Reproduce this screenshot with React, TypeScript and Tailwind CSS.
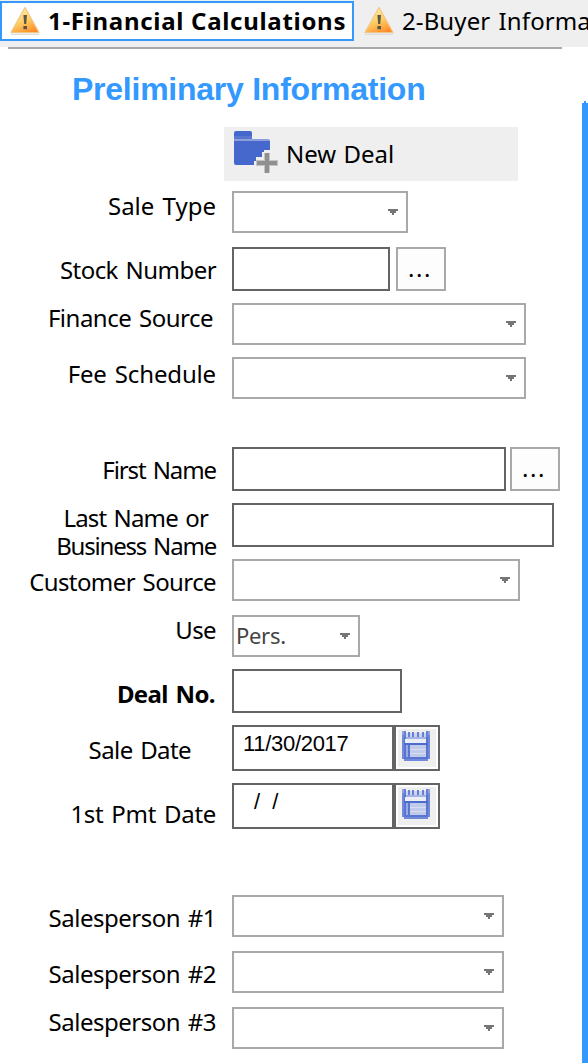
import { ReactNode } from "react";
import clsx from "clsx";

function WarningIcon() {
  return (
    <svg width="32" height="30" viewBox="0 0 32 30" className="shrink-0">
      <defs>
        <linearGradient id="warn" x1="0.3" y1="0" x2="0.75" y2="1">
          <stop offset="0" stopColor="#fff0a8" />
          <stop offset="0.5" stopColor="#fdcf66" />
          <stop offset="1" stopColor="#ff8a26" />
        </linearGradient>
      </defs>
      <path d="M2 27.5h28v1.5H2z" fill="#dcdcdc" />
      <path d="M16 1.5 30 26.5H2z" fill="url(#warn)" stroke="#f3c582" strokeWidth="1.2" strokeLinejoin="round" />
      <path d="M14.4 9h3.6l-.8 9h-2zM14.4 20H18v3.2h-3.6z" fill="#5c5648" />
    </svg>
  );
}

function FolderPlusIcon() {
  return (
    <svg width="44" height="44" viewBox="0 0 44 44" className="shrink-0">
      <path d="M0 2q0-2 2-2h14q2 0 2 2v6H0z" fill="#4667cb" />
      <path d="M0 5h18v3H0z" fill="#5a77d0" />
      <path d="M0 10h36v9h-6v2h-2v5h-6v4h-2v4H2q-2 0-2-2z" fill="#4667cb" />
      <path d="M0 8h34q2 0 2 2H0z" fill="#8c9fdc" />
      <path d="M30 22h6v7h8v6h-8v7h-6v-7h-8v-6h8z" fill="#c4c4c4" />
      <path d="M31 22h4v8h8v4h-8v8h-4v-8h-8v-4h8z" fill="#909090" />
    </svg>
  );
}

function CalendarIcon() {
  return (
    <svg width="28" height="30" viewBox="0 0 28 30" shapeRendering="crispEdges">
      <path d="M0 0h2v6H0zM26 0h2v6h-2z" fill="#8ea2df" />
      <path d="M2 2h24v4H2z" fill="#ccd4ee" />
      <path d="M2 0h2v6H2zM6 1h2v5H6zM10 1h2v5h-2zM15 1h2v5h-2zM20 1h2v5h-2zM24 0h2v6h-2z" fill="#6580d4" />
      <path d="M0 4h2v24H0zM26 4h2v24h-2zM2 28h24v2H2z" fill="#7189d8" />
      <path d="M2 6h2v22H2zM24 6h2v22h-2zM2 26h24v2H2z" fill="#5875d1" />
      <path d="M4 6h20v2H4z" fill="#a3b3e4" />
      <path d="M3 8h21v4H3z" fill="#eceef6" />
      <path d="M2 12h24v2H2z" fill="#4c6ccd" />
      <path d="M4 14h2v12H4z" fill="#99abe1" />
      <path d="M6 14h2v12H6z" fill="#5875d1" />
      <path d="M8 14h16v12H8z" fill="#c0caea" />
      <path d="M8 18h16v1H8zM8 22h16v1H8z" fill="#d8def2" />
    </svg>
  );
}

function TextBox({ className, children }: { className: string; children?: ReactNode }) {
  return <div className={clsx("border-2 border-[#646464] bg-white", className)}>{children}</div>;
}

function Select({ className, value }: { className: string; value?: string }) {
  return (
    <div className={clsx("flex h-[42px] items-center justify-between border-2 border-[#a9a9a9] bg-white pr-2 pl-0.5", className)}>
      <span className="pb-[3px] text-[22px] leading-7 tracking-[-0.3px] text-[#444]">{value}</span>
      <svg width="10" height="6" viewBox="0 0 10 6" shapeRendering="crispEdges">
        <path d="M0 0h10v2H8v2H6v2H4V4H2V2H0z" fill="#757575" />
      </svg>
    </div>
  );
}

function BrowseButton({ className }: { className: string }) {
  return (
    <button className={clsx("h-11 w-[50px] border-2 border-[#a9a9a9] bg-[#fdfdfd] pr-0.5 pb-0.5 leading-7 tracking-[1.6px]", className)}>
      ...
    </button>
  );
}

function DateBox({ value, className }: { value: string; className: string }) {
  return (
    <>
      <TextBox className={clsx("h-[46px] w-[162px] pt-[5px] font-['Liberation_Sans',Arial,sans-serif] text-[22px] leading-6 whitespace-pre", className)}>
        {value}
      </TextBox>
      <button className="h-[46px] w-[46px] border-2 border-[#646464] bg-white p-0.5">
        <span className="flex h-[38px] justify-center bg-[#efefef] pt-0.5 pr-0.5">
          <CalendarIcon />
        </span>
      </button>
    </>
  );
}

interface RowProps {
  label: ReactNode;
  // vertical margin of the row and height of the control
  className: string;
  // vertical offset and spacing of the caption
  labelClassName: string;
  children: ReactNode;
}

function Row({ label, className, labelClassName, children }: RowProps) {
  return (
    <div className={clsx("flex items-start", className)}>
      <div className={clsx("w-[232px] shrink-0 text-right leading-7 whitespace-nowrap [word-spacing:2px]", labelClassName)}>{label}</div>
      {children}
    </div>
  );
}

export default function App() {
  return (
    <div className="flex h-[1063px] w-[588px] flex-col overflow-hidden bg-white font-['Noto_Sans',Tahoma,sans-serif] text-[24px] text-black">
      <header className="flex h-[47px] shrink-0 bg-[#efefef] pt-px whitespace-nowrap">
        <div className="flex h-10 w-[354px] shrink-0 border-2 border-[#3399ff] bg-white pt-[3px] pl-[7px]">
          <WarningIcon />
          <span className="mt-px ml-[7px] leading-7 font-bold tracking-[0.7px]">1-Financial Calculations</span>
        </div>
        <div className="flex pt-[5px] pl-[9px]">
          <WarningIcon />
          <span className="mt-px ml-[7px] leading-7 tracking-[0.1px] [word-spacing:2px]">2-Buyer Information</span>
        </div>
      </header>
      <div className="ml-2 h-0.5 w-[554px] shrink-0 bg-[#a9a9a9]" />

      <div className="flex grow">
        <main className="w-[582px]">
          <h1 className="mt-[22px] ml-[72px] font-['Liberation_Sans',Arial,sans-serif] text-[32px] leading-9 font-bold tracking-[-0.25px] text-[#3399ff]">
            Preliminary Information
          </h1>
          <button className="mt-5 ml-[224px] flex h-[54px] w-[294px] bg-[#efefef] pt-1 pl-[10px]">
            <FolderPlusIcon />
            <span className="mt-[9px] ml-2 leading-7 [word-spacing:1px]">New Deal</span>
          </button>

          <Row label="Sale Type" className="mt-[10px]" labelClassName="pt-px pr-4">
            <Select className="w-44" />
          </Row>
          <Row label="Stock Number" className="mt-[14px]" labelClassName="pt-[9px] pr-4 tracking-[-0.55px]">
            <TextBox className="h-11 w-[158px]" />
            <BrowseButton className="ml-1.5" />
          </Row>
          <Row label="Finance Source" className="mt-3" labelClassName="pt-px pr-[19px] tracking-[-0.5px]">
            <Select className="w-[294px]" />
          </Row>
          <Row label="Fee Schedule" className="mt-3" labelClassName="pt-[3px] pr-4 tracking-[-0.15px]">
            <Select className="w-[294px]" />
          </Row>

          <Row label="First Name" className="mt-12" labelClassName="pt-[9px] pr-4 tracking-[-1.1px]">
            <TextBox className="h-11 w-[274px]" />
            <BrowseButton className="ml-1" />
          </Row>
          <Row
            label={
              <>
                <div className="pr-2 tracking-[-0.85px]">Last Name or</div>
                <div className="tracking-[-1.2px]">Business Name</div>
              </>
            }
            className="mt-3 h-11"
            labelClassName="pt-px pr-4"
          >
            <TextBox className="h-11 w-[322px]" />
          </Row>
          <Row label="Customer Source" className="mt-3" labelClassName="pt-[9px] pr-4 tracking-[-0.6px]">
            <Select className="w-72" />
          </Row>
          <Row label="Use" className="mt-[14px]" labelClassName="pt-px pr-4 tracking-[-0.6px]">
            <Select className="w-32" value="Pers." />
          </Row>
          <Row label="Deal No." className="mt-3" labelClassName="pt-[11px] pr-[17px] font-bold tracking-[-0.6px]">
            <TextBox className="h-11 w-[170px]" />
          </Row>
          <Row label="Sale Date" className="mt-3" labelClassName="pt-[11px] pr-[41px] tracking-[-0.6px]">
            <DateBox value="11/30/2017" className="pl-[9px] tracking-[-0.3px]" />
          </Row>
          <Row label="1st Pmt Date" className="mt-3 h-[46px]" labelClassName="pt-[17px] pr-4 tracking-[-0.3px]">
            <DateBox value="/  /" className="pl-5" />
          </Row>

          <Row label="Salesperson #1" className="mt-[66px]" labelClassName="pt-[9px] pr-[16px] tracking-[-0.5px]">
            <Select className="w-[272px]" />
          </Row>
          <Row label="Salesperson #2" className="mt-[14px]" labelClassName="pt-[9px] pr-[16px] tracking-[-0.5px]">
            <Select className="w-[272px]" />
          </Row>
          <Row label="Salesperson #3" className="mt-[14px]" labelClassName="pt-px pr-[16px] tracking-[-0.5px]">
            <Select className="w-[272px]" />
          </Row>
        </main>

        <aside className="flex w-1.5 flex-col items-center pt-[52px]">
          <div className="h-0.5 w-0.5 bg-[#3399ff]" />
          <div className="w-1.5 grow bg-[#3399ff]" />
        </aside>
      </div>
    </div>
  );
}
